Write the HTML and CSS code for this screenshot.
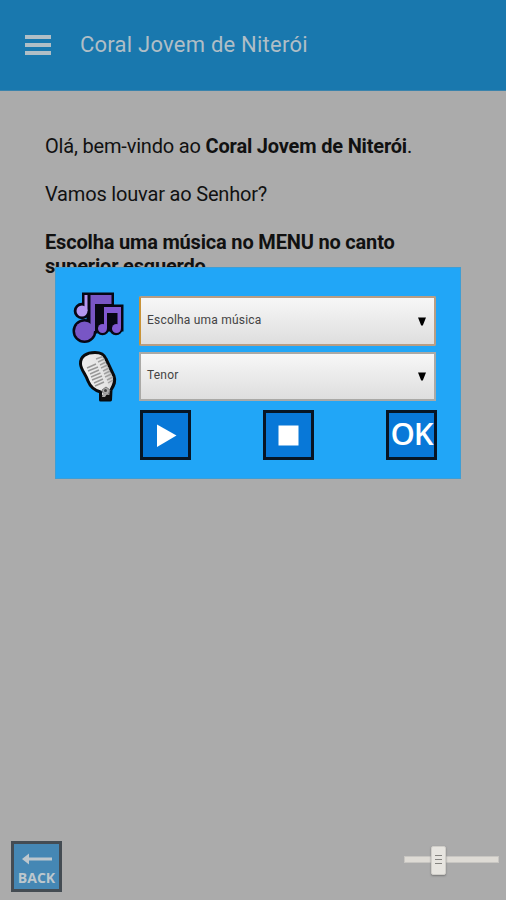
FILE: index.html
```html
<!DOCTYPE html>
<html lang="pt-BR">
<head>
<meta charset="utf-8">
<title>Coral Jovem de Niterói</title>
<link rel="stylesheet" href="styles.css">
</head>
<body>
<div class="app">
  <header class="bar">
    <div class="menu"><span></span><span></span><span></span></div>
    <h1>Coral Jovem de Niterói</h1>
  </header>
  <main class="content">
    <p class="welcome">Olá, bem-vindo ao <b>Coral Jovem de Niterói</b>.</p>
    <p class="praise">Vamos louvar ao Senhor?</p>
    <p class="hint"><b>Escolha uma música no MENU no canto superior esquerdo.</b></p>
  </main>
  <footer class="footer">
    <div class="back">
      <svg width="30" height="14" viewBox="0 0 30 14"><path d="M0 7 L7 1.500 V5.500 H30 V8.500 H7 V12.500Z" fill="#bdc7cd"/></svg>
      <span>BACK</span>
    </div>
    <div class="slider"><div class="track"></div><div class="thumb"><i></i><i></i><i></i></div></div>
  </footer>
</div>
<section class="dialog">
  <div class="row">
    <svg class="icon" width="54" height="54" viewBox="3 4 54 54">
      <g stroke="#070714" stroke-width="5" fill="#070714">
        <path d="M16.500 9H43.500V21H53V43H36L27 36V45H21V25H16.500Z"/>
        <circle cx="14" cy="25" r="5.800"/><circle cx="16.500" cy="45" r="9.500"/><circle cx="34.500" cy="42.500" r="4.300"/><circle cx="48" cy="42.500" r="4.300"/>
      </g>
      <g fill="#b597f1"><path d="M16.500 9H19.500V25H16.500Z"/><circle cx="14" cy="25" r="5.500"/></g>
      <g fill="#7856c5"><path d="M22.500 9H43.500V18H27V45H22.500Z"/><circle cx="16.500" cy="45" r="9.500"/></g>
      <g fill="#8159d2"><path d="M36 21H53V27H39V42H36Z M49.500 21H53V42H49.500Z"/><circle cx="34.500" cy="42.500" r="4.500"/><circle cx="48.500" cy="42.500" r="4.500"/></g>
    </svg>
    <div class="select focused"><span>Escolha uma música</span><svg width="8" height="9" viewBox="0 0 8 9"><path d="M0 .5H8L4.800 8.500H3.200Z"/></svg></div>
  </div>
  <div class="row second">
    <svg class="icon" width="54" height="54" viewBox="-1 3 54 54">
      <defs><linearGradient id="metal" gradientTransform="rotate(-20 .5 .5)"><stop offset="0" stop-color="#f2f2f2"/><stop offset=".7" stop-color="#e4e4e4"/><stop offset="1" stop-color="#b8b8b8"/></linearGradient></defs>
      <path d="M8.500 17C8 9 15 5.500 23 5.500C29 5.500 32 7 34 12L42 29C44 34 42 38 39 43L38.500 53H28.500L28.500 45C21 43 18 39 16 34C13 26 9 23 8.500 17Z" fill="url(#metal)" stroke="#090b0e" stroke-width="3" stroke-linejoin="round"/>
      <path d="M15 21L24 17M16 24L26 20M18 27L27 23M19 30L28.500 26M20 33L30 29M22 36L31 32M23 39L32 35" stroke="#989898" stroke-width="1.400"/>
      <path d="M24 12L31 9.500M26 15L32.500 12M28 18L34 15M29 21L35.500 18M31 24L37 21M32 27L38 24M33 30L39.500 27M35 33L41 30M36 36L41 33" stroke="#a0a0a0" stroke-width="1.400"/>
      <path d="M30 43L34 40L38 43L36 48L31 46Z" fill="#aaa" stroke="#777"/>
      <circle cx="33.500" cy="43.500" r="1.500" fill="#444"/>
      <path d="M29 48H38V53H29Z" fill="#111"/><path d="M31 46L35 47L33 50H30Z" fill="#aaa"/>
    </svg>
    <div class="select"><span>Tenor</span><svg width="8" height="9" viewBox="0 0 8 9"><path d="M0 .5H8L4.800 8.500H3.200Z"/></svg></div>
  </div>
  <div class="buttons">
    <div class="btn"><svg width="45" height="45" viewBox="0 0 45 45"><path d="M14 11.500V34L33.500 22.500Z" fill="#fff"/></svg></div>
    <div class="btn"><svg width="45" height="45" viewBox="0 0 45 45"><path d="M12.500 12.500H32.500V32.500H12.500Z" fill="#fff"/></svg></div>
    <div class="btn ok"><span>OK</span></div>
  </div>
</section>
</body>
</html>
```
FILE: styles.css
```css
* { box-sizing: border-box; }
body { margin: 0; background: #ababab; color: #111; font-family: Roboto, sans-serif; }
.app { height: 900px; display: flex; flex-direction: column; overflow: hidden; }
.bar { height: 91px; flex: none; display: flex; align-items: center; padding-left: 25px; background: #1978ae; border-bottom: 1px solid #3a83ac; }
.menu { width: 26px; height: 20px; display: flex; flex-direction: column; justify-content: space-between; }
.menu span { height: 4px; background: #b0bec6; }
h1 { margin: 0 0 0 29px; font-size: 22px; font-weight: 400; line-height: 30px; letter-spacing: .23px; color: #b0bec6; white-space: nowrap; }
.content { flex: 1; padding: 43px 45px 0; font-size: 20px; line-height: 24px; letter-spacing: -.18px; }
.content p { margin: 0 0 24px; }
.hint { width: 370px; }
.footer { height: 60px; flex: none; display: flex; justify-content: space-between; padding: 1px 7px 0 11px; }
.back { width: 51px; height: 51px; border: 3px solid #444c53; background: #4587b4; display: flex; flex-direction: column; align-items: center; padding-top: 8px; }
.back svg { display: block; }
.back span { font: bold 14px/15px "Open Sans", sans-serif; color: #bdc7cd; margin-top: 4px; }
.slider { position: relative; width: 95px; height: 36px; display: flex; align-items: center; }
.track { width: 95px; height: 7px; background: #dedbd5; border: 1px solid #c8c6c2; }
.thumb { position: absolute; left: 27px; top: 5px; width: 15px; height: 29px; background: #e7e5e0; border: 1px solid #d0cec9; border-radius: 2px; box-shadow: 0 1px 2px #777; display: flex; flex-direction: column; align-items: center; gap: 3px; padding-top: 8px; }
.thumb i { width: 7px; height: 1px; background: #858480; }
.dialog { position: absolute; left: 55px; top: 267px; width: 406px; height: 212px; background: #21a6f7; border: 1px solid #3e9ed5; padding: 28px 24px 0 15px; }
.row { height: 50px; display: flex; align-items: center; gap: 14px; }
.second { margin-top: 5px; }
.icon { flex: none; width: 54px; height: 54px; overflow: visible; }
.row:first-child .icon { margin-top: -8px; }
.second .icon { margin-top: 2px; }
.select { width: 297px; height: 49px; display: flex; align-items: center; justify-content: space-between; padding: 0 8px 2px 6px; border: 2px solid #aaa9a6; background: linear-gradient(#f7f7f7, #dedede); color: #444; font-size: 12px; letter-spacing: .2px; }
.select.focused { border-color: #b99d83; border-left-color: #c89339; border-radius: 2px; height: 50px; }
.select svg { margin-top: 2px; }
.buttons { display: flex; justify-content: space-between; width: 297px; margin: 9px 0 0 69px; }
.btn { width: 51px; height: 50px; border: 3px solid #071525; background: #0878d8; display: flex; align-items: center; justify-content: center; }
.ok span { color: #fff; font: 600 31px/40px "Open Sans", sans-serif; letter-spacing: -1px; margin-top: -4px; }
```
